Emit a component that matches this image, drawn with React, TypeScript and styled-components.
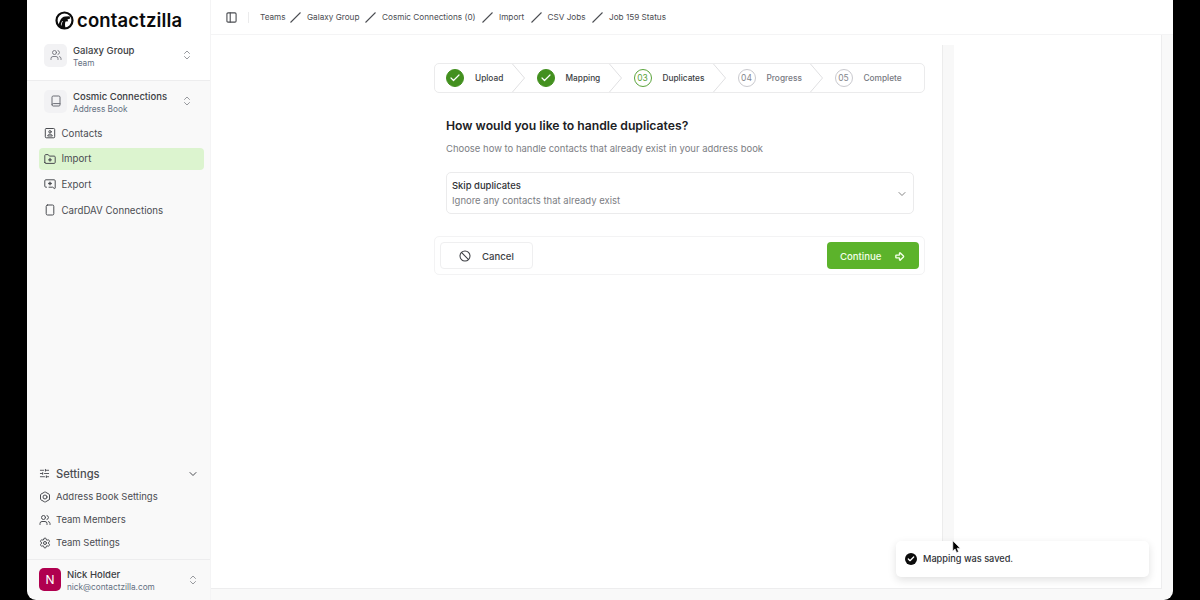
import React from 'react';
import styled, { createGlobalStyle } from 'styled-components';
import {
  ArrowBigRight,
  Ban,
  Bolt,
  Check,
  ChevronDown,
  ChevronsUpDown,
  Settings,
  SlidersHorizontal,
  Users,
} from 'lucide-react';

const crumbs = [
  { label: 'Teams', width: 25 },
  { label: 'Galaxy Group', width: 53 },
  { label: 'Cosmic Connections (0)', width: 95 },
  { label: 'Import', width: 26.5 },
  { label: 'CSV Jobs', width: 39.5 },
  { label: 'Job 159 Status', width: 57 },
];

const steps = [
  { label: 'Upload', state: 'done', width: 90.5 },
  { label: 'Mapping', state: 'done', width: 97 },
  { label: 'Duplicates', state: 'current', width: 104 },
  { label: 'Progress', state: 'todo', width: 97 },
  { label: 'Complete', state: 'todo', width: 100 },
];

function App() {
  return (
    <Screen>
      <GlobalStyle />
      <Window>
        <Sidebar>
          <SidebarTop>
            <Brand>
              <LogoMark />
              <BrandName>contactzilla</BrandName>
            </Brand>
            <Switcher>
              <IconBox><Users size={12} strokeWidth={1.7} /></IconBox>
              <SwitcherText>
                <Title>Galaxy Group</Title>
                <Subtitle>Team</Subtitle>
              </SwitcherText>
              <ChevronsUpDown size={12} strokeWidth={1.8} color="#8b8d93" />
            </Switcher>
          </SidebarTop>
          <Switcher>
            <IconBox><BookIcon /></IconBox>
            <SwitcherText>
              <Title>Cosmic Connections</Title>
              <Subtitle>Address Book</Subtitle>
            </SwitcherText>
            <ChevronsUpDown size={12} strokeWidth={1.8} color="#8b8d93" />
          </Switcher>
          <Nav>
            <NavItem><ContactIcon />Contacts</NavItem>
            <NavItem $active><FolderIcon />Import</NavItem>
            <NavItem><ExportIcon />Export</NavItem>
            <NavItem><DeviceIcon />CardDAV Connections</NavItem>
          </Nav>
          <SettingsGroup>
            <SettingsHeader>
              <SlidersHorizontal size={11} strokeWidth={2} />
              <span>Settings</span>
              <ChevronDown size={12} strokeWidth={2} />
            </SettingsHeader>
            <SettingsItem><Bolt size={12} strokeWidth={2} />Address Book Settings</SettingsItem>
            <SettingsItem><Users size={12} strokeWidth={2} />Team Members</SettingsItem>
            <SettingsItem><Settings size={12} strokeWidth={2} />Team Settings</SettingsItem>
          </SettingsGroup>
          <User>
            <Avatar>N</Avatar>
            <SwitcherText>
              <Title>Nick Holder</Title>
              <Subtitle>nick@contactzilla.com</Subtitle>
            </SwitcherText>
            <ChevronsUpDown size={12} strokeWidth={1.8} color="#8b8d93" />
          </User>
        </Sidebar>
        <Main>
          <Header>
            <PanelIcon />
            <Divider />
            {crumbs.map((crumb, i) => (
              <React.Fragment key={crumb.label}>
                {i > 0 && <Slash />}
                <Crumb $width={crumb.width}>{crumb.label}</Crumb>
              </React.Fragment>
            ))}
          </Header>
          <Body>
            <Page>
              <Stepper>
                {steps.map((step, i) => (
                  <Step key={step.label} $width={step.width}>
                    <StepCircle $state={step.state}>
                      {step.state === 'done' ? <Check size={12} strokeWidth={2.4} /> : `0${i + 1}`}
                    </StepCircle>
                    <StepLabel $state={step.state}>{step.label}</StepLabel>
                    {i < steps.length - 1 && <StepArrow />}
                  </Step>
                ))}
              </Stepper>
              <Form>
                <Heading>How would you like to handle duplicates?</Heading>
                <Lead>Choose how to handle contacts that already exist in your address book</Lead>
                <Select>
                  <div>
                    <SelectTitle>Skip duplicates</SelectTitle>
                    <SelectHint>Ignore any contacts that already exist</SelectHint>
                  </div>
                  <ChevronDown size={12} strokeWidth={2} color="#858585" />
                </Select>
              </Form>
              <Actions>
                <CancelButton><Ban size={12} strokeWidth={2.1} />Cancel</CancelButton>
                <ContinueButton>Continue<ArrowBigRight size={11} strokeWidth={3} /></ContinueButton>
              </Actions>
            </Page>
            <Strip />
          </Body>
        </Main>
      </Window>
      <Toast>
        <ToastIcon><Check size={8} strokeWidth={4} /></ToastIcon>
        Mapping was saved.
      </Toast>
      <Cursor />
    </Screen>
  );
}

const LogoMark = () => (
  <svg width="19" height="19" viewBox="0 0 19 19">
    <circle cx="9.5" cy="9.5" r="8" fill="#fff" stroke="#0b0b0b" strokeWidth="2.2" />
    <path d="M5.2 9.6 C6 7.2 8 5.8 10.4 5.6 L14.6 5.2 L15.2 7.4 L12.4 8.4 L13.2 10.2 L10.6 10.4 C9.8 12 9.8 14.4 10.6 17 C8 17.6 5 16.4 3.6 14 C4 12.2 4.6 11 5.2 9.6 Z" fill="#0b0b0b" />
    <path d="M6.4 14.4 C6.2 12.6 6.8 11 7.8 10" fill="none" stroke="#fff" strokeWidth=".8" />
  </svg>
);

const iconProps = {
  width: 12,
  height: 12,
  viewBox: '0 0 12 12',
  fill: 'none',
  stroke: 'currentColor',
  strokeLinecap: 'round',
  strokeLinejoin: 'round',
} as const;

const BookIcon = () => (
  <svg {...iconProps}>
    <path d="M2 9.8V2.2C2 1.4 2.5 1 3.2 1h5.6c.7 0 1.2.4 1.2 1.2V10c0 .6-.4 1-1 1H3.2C2.5 11 2 10.5 2 9.8s.5-1.2 1.2-1.2H10" />
  </svg>
);

const ContactIcon = () => (
  <svg {...iconProps}>
    <rect x="1.3" y="1.5" width="9.4" height="9.3" rx="1" />
    <path d="M3.8 8.6c.3-1 1-1.4 2.2-1.4s1.9.4 2.2 1.4z" />
    <circle cx="6" cy="4.8" r="1.2" />
  </svg>
);

const FolderIcon = () => (
  <svg {...iconProps}>
    <path d="M.8 9.5v-7c0-.5.4-.9.9-.9h2.5l1.2 1.5h4.8c.6 0 1 .4 1 1v5.4c0 .5-.4.9-1 .9H1.8c-.6 0-1-.4-1-.9z" />
    <path d="M4.7 6.8h2.6M6 5.5v2.6" strokeWidth="1.3" />
  </svg>
);

const ExportIcon = () => (
  <svg {...iconProps}>
    <path d="M2.5 9.2h-.7c-.6 0-1-.4-1-1V2.8c0-.6.4-1 1-1h8.4c.6 0 1 .4 1 1V10c0 .5-.5.8-.9.5L8.7 9.2H5" />
    <path d="M4.7 5.5h2.6M6 4.2v2.6" strokeWidth="1.3" />
  </svg>
);

const DeviceIcon = () => (
  <svg {...iconProps}>
    <rect x="2.2" y="1" width="7.6" height="10" rx="1.3" />
  </svg>
);

const PanelIcon = () => (
  <svg {...iconProps} width="11" height="11">
    <rect x="1" y="1" width="10" height="10" rx="1.2" strokeWidth="1.2" />
    <path d="M4.6 1v10" strokeWidth="1.2" />
  </svg>
);

const Slash = () => (
  <SlashSvg width="11" height="11" viewBox="0 0 11 11">
    <path d="M.5 10.5l10-10" stroke="#4b4d52" strokeWidth="1.1" />
  </SlashSvg>
);

const StepArrow = () => (
  <ArrowSvg width="13" height="28" viewBox="0 0 13 28">
    <path d="M.5 0l12 14L.5 28" fill="none" stroke="#e0e0e2" />
  </ArrowSvg>
);

const Cursor = () => (
  <CursorSvg width="10" height="14" viewBox="0 0 10 14">
    <path d="M.8.8v10.2l2.3-2.1 1.5 3.6 1.9-.8-1.5-3.5h3.2z" fill="#000" stroke="#fff" strokeWidth=".6" />
  </CursorSvg>
);

const GlobalStyle = createGlobalStyle`
  * {
    box-sizing: border-box;
  }

  body {
    background: #000;
    margin: 0;
    overflow: hidden;
  }

  svg {
    flex-shrink: 0;
  }
`;

const Screen = styled.div`
  background: #000;
  color: #4b4d52;
  font-family: Inter, "Liberation Sans", sans-serif;
  height: 600px;
  padding: 0 27px;
  position: relative;
  white-space: nowrap;
  width: 1200px;
`;

const Window = styled.div`
  background: #f9f9f9;
  border-radius: 0 0 9px 9px;
  display: flex;
  height: 600px;
  overflow: hidden;
`;

const Sidebar = styled.aside`
  display: flex;
  flex-direction: column;
  width: 183px;
`;

const SidebarTop = styled.div`
  background: #fff;
  border-bottom: 1px solid #ededee;
  height: 81px;
  padding-top: 9px;
`;

const Brand = styled.div`
  align-items: center;
  color: #0b0b0b;
  display: flex;
  gap: 3px;
  height: 22px;
  margin-bottom: 4px;
  padding-left: 28px;
`;

const BrandName = styled.span`
  font-size: 18.5px;
  font-weight: 600;
  letter-spacing: 0.15px;
  line-height: 22px;
`;

const Switcher = styled.div`
  align-items: center;
  display: flex;
  height: 40px;
  padding: 0 17px;
`;

const IconBox = styled.div`
  align-items: center;
  background: #f2f2f4;
  border-radius: 5px;
  color: #6b6d75;
  display: flex;
  height: 23px;
  justify-content: center;
  width: 23px;
`;

const SwitcherText = styled.div`
  flex: 1;
  margin-left: 6px;
  padding-top: 2px;
`;

const Title = styled.div`
  color: #3c3e43;
  font-size: 9.5px;
  font-weight: 500;
  line-height: 13px;
`;

const Subtitle = styled.div`
  color: #647082;
  font-size: 8.25px;
  line-height: 12px;
`;

const Nav = styled.nav`
  display: flex;
  flex: 1;
  flex-direction: column;
  gap: 3.7px;
  padding: 1px 6px 0 12px;
`;

const NavItem = styled.div<{ $active?: boolean }>`
  align-items: center;
  background: ${(p) => (p.$active ? '#dcf4cf' : 'transparent')};
  border-radius: 4px;
  color: #4b4d52;
  display: flex;
  font-size: 9.7px;
  gap: 5.5px;
  height: 22px;
  padding-left: 5px;
`;

const SettingsGroup = styled.div`
  height: 97px;
  padding: 0 11px 0 12px;
`;

const SettingsHeader = styled.div`
  align-items: center;
  display: flex;
  font-size: 11.2px;
  font-weight: 500;
  gap: 6px;
  height: 23px;

  span {
    flex: 1;
  }
`;

const SettingsItem = styled.div`
  align-items: center;
  display: flex;
  font-size: 9.5px;
  gap: 5px;
  height: 23px;
`;

const User = styled.div`
  align-items: center;
  border-top: 1px solid #ededee;
  display: flex;
  height: 41px;
  padding: 0 11px 1px 12px;
`;

const Avatar = styled.div`
  align-items: center;
  background: #b0004f;
  border-radius: 5px;
  color: #fff;
  display: flex;
  font-size: 12px;
  height: 23px;
  justify-content: center;
  width: 22px;
`;

const Main = styled.main`
  border-left: 1px solid #f4f4f5;
  flex: 1;
`;

const Header = styled.header`
  align-items: center;
  background: #fff;
  border-bottom: 1px solid #f4f4f5;
  color: #4b4d52;
  display: flex;
  height: 35px;
  padding-left: 15px;
`;

const Divider = styled.div`
  background: #ebebec;
  height: 11px;
  margin: 0 11px;
  width: 1px;
`;

const Crumb = styled.span<{ $width: number }>`
  font-size: 8.2px;
  width: ${(p) => p.$width}px;
`;

const SlashSvg = styled.svg`
  margin: 0 6px 0 5px;
`;

const Body = styled.div`
  background: #fff;
  border-bottom: 1px solid #ededee;
  border-right: 1px solid #ededee;
  display: flex;
  height: 554px;
  margin-right: 11px;
`;

const Page = styled.div`
  padding: 28px 17px 0 223px;
  width: 731px;
`;

const Strip = styled.div`
  background: #f8f8f8;
  border-left: 1px solid #ececec;
  height: 510px;
  margin-top: 10px;
  width: 12px;
`;

const Stepper = styled.div`
  border: 1px solid #ebebec;
  border-radius: 5px;
  display: flex;
  height: 30px;
`;

const Step = styled.div<{ $width: number }>`
  align-items: center;
  display: flex;
  padding-left: 11px;
  width: ${(p) => p.$width}px;
`;

const circleColors: Record<string, string> = {
  done: '#43901f',
  current: '#5aa43b',
  todo: '#c9c9ce',
};

const StepCircle = styled.div<{ $state: string }>`
  align-items: center;
  background: ${(p) => (p.$state === 'done' ? '#43901f' : '#fff')};
  border: 1.5px solid ${(p) => circleColors[p.$state]};
  border-radius: 50%;
  color: ${(p) => (p.$state === 'done' ? '#fff' : p.$state === 'current' ? '#5aa43b' : '#85878d')};
  display: flex;
  flex-shrink: 0;
  font-size: 8.5px;
  height: 18px;
  justify-content: center;
  width: 18px;
`;

const StepLabel = styled.span<{ $state: string }>`
  color: ${(p) => (p.$state === 'todo' ? '#77797f' : '#3c3e43')};
  flex: 1;
  font-size: 8.3px;
  font-weight: 500;
  margin-left: 11px;
`;

const ArrowSvg = styled.svg`
  margin-right: 0.5px;
`;

const Form = styled.section`
  padding: 24px 11px 0 12px;
`;

const Heading = styled.h1`
  color: #202124;
  font-size: 12.2px;
  font-weight: 600;
  line-height: 18px;
  margin: 0;
`;

const Lead = styled.p`
  color: #7c7e84;
  font-size: 9.48px;
  line-height: 14px;
  margin: 7px 0 16px;
`;

const Select = styled.div`
  align-items: center;
  border: 1px solid #ebebec;
  border-radius: 5px;
  display: flex;
  height: 42px;
  justify-content: space-between;
  padding: 1px 5px 0;
`;

const SelectTitle = styled.div`
  color: #303236;
  font-size: 9.45px;
  font-weight: 500;
  line-height: 14px;
`;

const SelectHint = styled.div`
  color: #7c7e84;
  font-size: 9.5px;
  line-height: 15px;
`;

const Actions = styled.div`
  align-items: center;
  border: 1px solid #f3f3f4;
  border-radius: 5px;
  display: flex;
  height: 39px;
  justify-content: space-between;
  margin-top: 22px;
  padding: 0 5px;
`;

const Button = styled.div`
  align-items: center;
  border-radius: 4px;
  display: flex;
  font-size: 9.6px;
  font-weight: 500;
  height: 27px;
  width: 92px;
`;

const CancelButton = styled(Button)`
  border: 1px solid #efeff0;
  color: #3c3e43;
  gap: 11px;
  padding: 1px 0 0 18px;
  width: 93px;
`;

const ContinueButton = styled(Button)`
  background: #5cb32b;
  color: #f3ffe9;
  justify-content: space-between;
  padding: 1px 14px 0 13px;
`;

const Toast = styled.div`
  align-items: center;
  background: #fff;
  border-radius: 5px;
  box-shadow: 0 3px 9px rgba(0, 0, 0, 0.12);
  color: #303236;
  display: flex;
  font-size: 9.2px;
  font-weight: 500;
  gap: 6px;
  height: 36px;
  left: 896px;
  padding: 0 0 1px 9px;
  position: absolute;
  top: 541px;
  width: 253px;
`;

const ToastIcon = styled.span`
  align-items: center;
  background: #0b0b0b;
  border-radius: 50%;
  color: #fff;
  display: flex;
  height: 12px;
  justify-content: center;
  width: 12px;
`;

const CursorSvg = styled.svg`
  left: 952px;
  position: absolute;
  top: 540px;
`;

export default App;
